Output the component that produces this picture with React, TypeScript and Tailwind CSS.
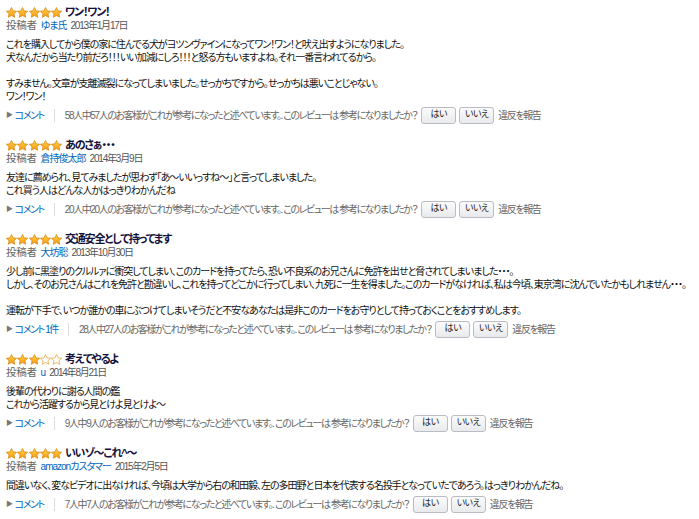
import React from "react";

type Review = {
  stars: number;
  title: string;
  author: string;
  date: string;
  body: string[];
  comment: string;
  helpful: string;
};

const REVIEWS: Review[] = [
  {
    stars: 5,
    title: "ワン！ワン！",
    author: "ゆま氏",
    date: "2013年1月17日",
    body: [
      "これを購入してから僕の家に住んでる犬がヨツンヴァインになってワン！ワン！と吠え出すようになりました。",
      "犬なんだから当たり前だろ！！！いい加減にしろ！！！と怒る方もいますよね。それ一番言われてるから。",
      "",
      "すみません。文章が支離滅裂になってしまいました。せっかちですから。せっかちは悪いことじゃない。",
      "ワン！ワン！",
    ],
    comment: "コメント",
    helpful: "58人中57人のお客様がこれが参考になったと述べています。. このレビューは 参考になりましたか？",
  },
  {
    stars: 5,
    title: "あのさぁ・・・",
    author: "倉持俊太郎",
    date: "2014年3月9日",
    body: [
      "友達に薦められ、見てみましたが思わず「あ～いいっすね～」と言ってしまいました。",
      "これ買う人はどんな人かはっきりわかんだね",
    ],
    comment: "コメント",
    helpful: "20人中20人のお客様がこれが参考になったと述べています。. このレビューは 参考になりましたか？",
  },
  {
    stars: 5,
    title: "交通安全として持ってます",
    author: "大坊聡",
    date: "2013年10月30日",
    body: [
      "少し前に黒塗りのクルルァに衝突してしまい、このカードを持ってたら、恐い不良系のお兄さんに免許を出せと脅されてしまいました・・・。",
      "しかし、そのお兄さんはこれを免許と勘違いし、これを持ってどこかに行ってしまい、九死に一生を得ました。このカードがなければ、私は今頃、東京湾に沈んでいたかもしれません・・・。",
      "",
      "運転が下手で、いつか誰かの車にぶつけてしまいそうだと不安なあなたは是非このカードをお守りとして持っておくことをおすすめします。",
    ],
    comment: "コメント 1件",
    helpful: "28人中27人のお客様がこれが参考になったと述べています。. このレビューは 参考になりましたか？",
  },
  {
    stars: 3,
    title: "考えてやるよ",
    author: "u",
    date: "2014年8月21日",
    body: ["後輩の代わりに謝る人間の鑑", "これから活躍するから見とけよ見とけよ～"],
    comment: "コメント",
    helpful: "9人中9人のお客様がこれが参考になったと述べています。. このレビューは 参考になりましたか？",
  },
  {
    stars: 5,
    title: "いいゾ～これ^～",
    author: "amazonカスタマー",
    date: "2015年2月5日",
    body: [
      "間違いなく、変なビデオに出なければ、今頃は大学から右の和田毅、左の多田野と日本を代表する名投手となっていたであろう。はっきりわかんだね。",
    ],
    comment: "コメント",
    helpful: "7人中7人のお客様がこれが参考になったと述べています。. このレビューは 参考になりましたか？",
  },
];

function Star({ filled }: { filled: boolean }) {
  return (
    <svg width="11" height="11" viewBox="1 1.2 22 21" className="block">
      <defs>
        <linearGradient id="starFill" x1="0" y1="0" x2="0" y2="1">
          <stop offset="0" stopColor="#ffd54d" />
          <stop offset="1" stopColor="#f49a10" />
        </linearGradient>
      </defs>
      <path
        d="M12 1.8l3.1 6.6 7.2.8-5.4 4.9 1.5 7.2L12 17.7l-6.4 3.6 1.5-7.2-5.4-4.9 7.2-.8z"
        fill={filled ? "url(#starFill)" : "#fff"}
        stroke={filled ? "#d9860f" : "#e3a33a"}
        strokeWidth="1.5"
        strokeLinejoin="round"
      />
    </svg>
  );
}

function ReviewBlock({ r }: { r: Review }) {
  return (
    <div className="mb-[15px]">
      <div className="flex h-[13px] items-center">
        <div className="flex gap-[0.25px]">
          {[0, 1, 2, 3, 4].map((i) => (
            <Star key={i} filled={i < r.stars} />
          ))}
        </div>
        <span className="ml-[3px] text-[11px] font-bold leading-[13px] tracking-[-1.2px] text-[#14113a]">
          {r.title}
        </span>
      </div>
      <div className="flex h-[13px] items-center leading-[13px]">
        <span className="text-[10.5px] tracking-[-0.3px] text-[#666]">投稿者</span>
        <span className="ml-[4px] text-[10px] tracking-[-1px] text-[#0066c0]">{r.author}</span>
        <span className="ml-[4px] text-[10px] tracking-[-1.2px] text-[#555]">{r.date}</span>
      </div>
      <div className="mt-[6px] text-[10px] leading-[13px] tracking-[-1px] text-[#111] whitespace-nowrap">
        {r.body.map((line, i) => (
          <div key={i} className="h-[13px]">
            {line}
          </div>
        ))}
      </div>
      <div className="mt-[3px] flex h-[18px] items-center whitespace-nowrap text-[10px] tracking-[-1.4px]">
        <span className="text-[7px] text-[#777]">▶</span>
        <span className="ml-[3px] text-[#0066c0]">{r.comment}</span>
        <span className="mx-[10px] h-[13px] w-px bg-[#ddd]" />
        <span className="text-[#666]">{r.helpful}</span>
        <button className="ml-[4px] h-[17px] w-[35px] rounded-[3px] border border-[#b9bcc2] bg-gradient-to-b from-[#fbfbfc] to-[#e9eaec] text-[9px] tracking-[-0.5px] text-[#222]">
          はい
        </button>
        <button className="ml-[3px] h-[17px] w-[35px] rounded-[3px] border border-[#b9bcc2] bg-gradient-to-b from-[#fbfbfc] to-[#e9eaec] text-[9px] tracking-[-0.5px] text-[#222]">
          いいえ
        </button>
        <span className="ml-[4px] text-[#666]">違反を報告</span>
      </div>
    </div>
  );
}

export default function App() {
  return (
    <div
      className="min-h-[519px] w-[699px] overflow-hidden bg-white pl-[6px] pt-[6px] [font-feature-settings:'palt']"
      style={{ fontFamily: '"Liberation Sans", "Noto Sans CJK JP", sans-serif' }}
    >
      {REVIEWS.map((r, i) => (
        <ReviewBlock key={i} r={r} />
      ))}
    </div>
  );
}
